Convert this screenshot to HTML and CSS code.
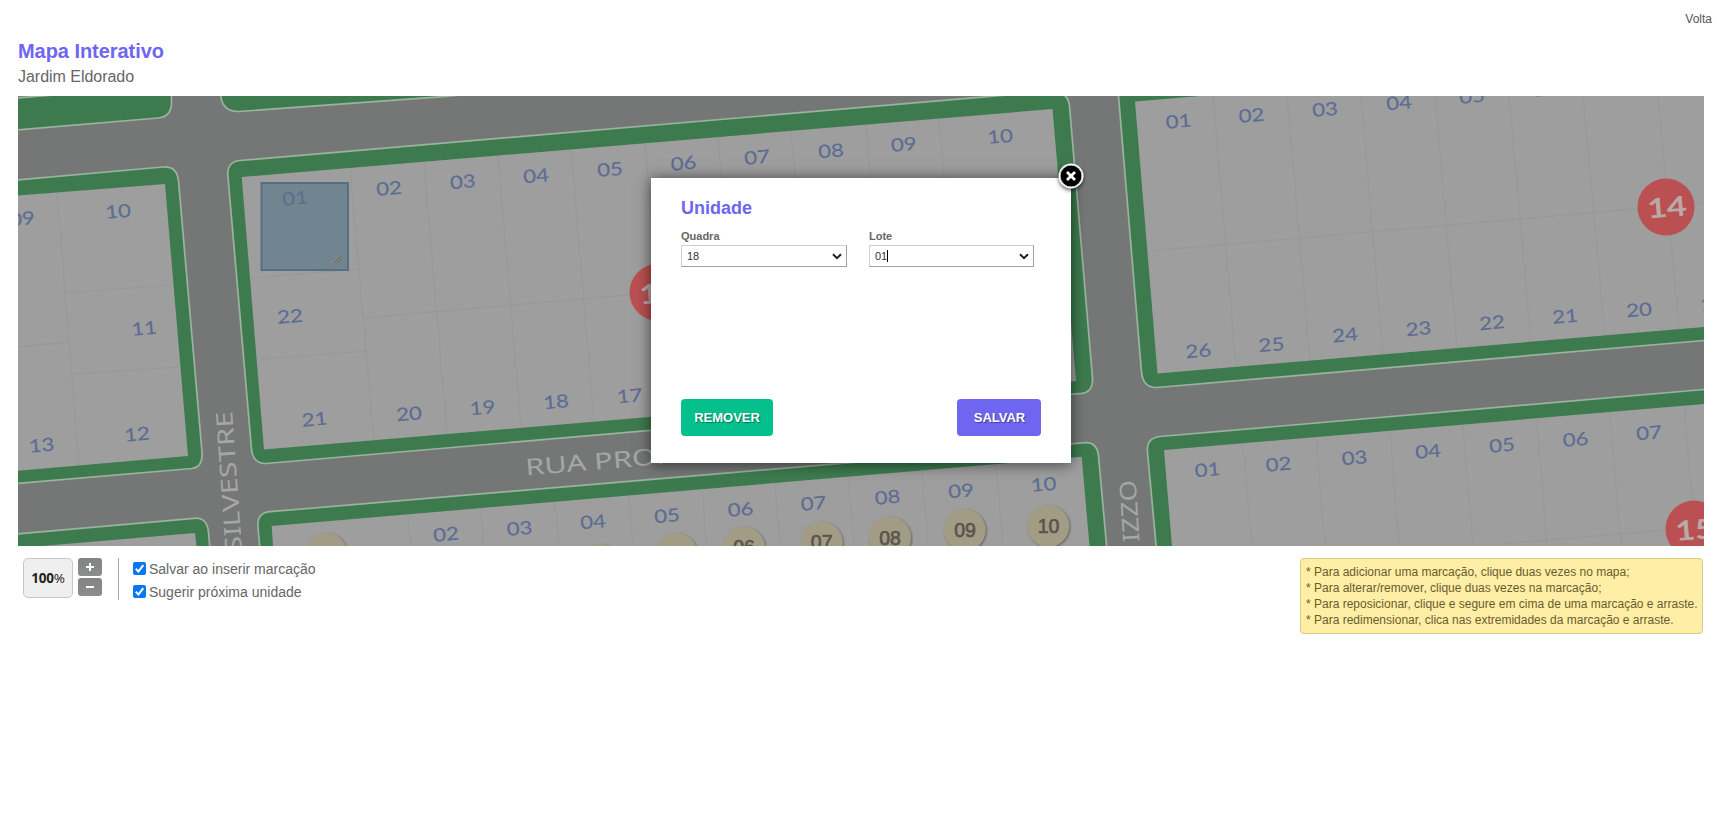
FILE: index.html
```html
<!DOCTYPE html>
<html lang="pt-BR">
<head>
<meta charset="utf-8">
<title>Mapa Interativo</title>
<link rel="stylesheet" href="styles.css">
</head>
<body>
<nav class="topbar"><a class="back">Volta</a></nav>
<main class="page">
  <h1 class="title">Mapa Interativo</h1>
  <p class="subtitle">Jardim Eldorado</p>

  <div class="map">
    <svg class="plan" viewBox="18 96 1686 450" width="1686" height="450">
      <rect class="road" x="18" y="96" width="1686" height="450"/>
      <!-- blocks with grass border -->
      <g class="grass">
        <path d="M10 98.500L60 94.500H171.500V102Q171.500 117 158 118L10 130.500Z"/>
        <path d="M220.500 90Q220 112 239 111.500L440 96.800L520 90Z"/>
        <path d="M10 180.500L163 167Q177 166 178.500 181L202 452Q203 467 192 468.500L10 484Z"/>
        <path d="M228 177Q226 162 240 160.500L1048 91.500Q1068 90 1069.500 106L1092.500 378Q1093 392 1082 393.300L266 463.500Q253 464 251.500 449Z"/>
        <path d="M1118 90L1141.500 372Q1143 388 1157 387.500L1710 340V90Z"/>
        <path d="M10 534.500L194 518.300Q207 517 208.500 532L210 550H10Z"/>
        <path d="M260 550L258 527Q256.500 513 270 511.700L1085 442.700Q1097 442 1098.500 456L1107 550Z"/>
        <path d="M1156.500 550L1147.500 452Q1146 438 1160 436.500L1710 389V550Z"/>
      </g>
      <g class="block">
        <path d="M18 195.500L165 184L188 456L18 470.700Z"/>
        <path d="M241.700 177L1052.500 109L1076 381L264 449.500Z"/>
        <path d="M1135 101.500L1200 96H1704V327L1157.500 373.500Z"/>
        <path d="M42 546L195 533L196.500 546Z"/>
        <path d="M271.700 526L1081.700 456.700L1089.500 546H273Z"/>
        <path d="M1164 450L1704 404V546H1172Z"/>
      </g>
      <path class="grid" d="M57 193L79 465M65 293L170 285M73 374L180 367M18 347L68 342M350 168L374 440M424 162L447 434M498 156L521 428M571 149L594 421M645 143L668 415M718 137L741 409M791 131L814 403M866 125L889 397M939 119L962 391M250 278L359 269M261 359L367 351M363 318L1066 257M1213 96L1236 366M1287 96L1310 360M1361 96L1383 354M1435 96L1457 348M1509 96L1531 342M1583 96L1605 335M1658 96L1679 329M1150 251L1704 203M408 515L411 546M481 508L484 546M555 502L559 546M629 496L633 546M702 489L707 546M775 483L780 546M848 477L854 546M922 471L928 546M996 464L1003 546M1243 444L1252 546M1316 438L1325 546M1390 432L1399 546M1463 425L1473 546M1537 419L1547 546M1610 413L1621 546M1684 406L1696 546M1500 544L1704 527"/>

      <rect class="marker" x="261.500" y="183" width="86.500" height="87"/>
      <path class="grip" d="M331 262.500H340V254Z"/>
      <path class="grip-lines" d="M334 263L341 256M337 263.500L341 259.500"/>

      <g class="street">
        <text transform="translate(242 551.500) rotate(-94)" textLength="141" lengthAdjust="spacingAndGlyphs">SILVESTRE</text>
        <text transform="translate(1139.500 541.500) rotate(-93.500)" textLength="62" lengthAdjust="spacingAndGlyphs">IZZO</text>
        <text transform="translate(526 475.500) rotate(-4.800)" textLength="147" lengthAdjust="spacingAndGlyphs">RUA PROF</text>
      </g>

      <g class="lots">
        <text x="22" y="218">09</text><text x="118" y="210.500">10</text><text x="144" y="327.500">11</text><text x="137" y="433.500">12</text><text x="41.500" y="444.500">13</text>
        <text class="covered" x="295" y="197.500">01</text><text x="389" y="187.500">02</text><text x="462.700" y="181">03</text><text x="536" y="175">04</text><text x="610" y="168.500">05</text><text x="683.500" y="162.500">06</text><text x="757" y="156.500">07</text><text x="831" y="150">08</text><text x="903.700" y="143.500">09</text><text x="1000" y="135.500">10</text>
        <text x="290" y="315.500">22</text><text x="314.500" y="418.500">21</text><text x="409" y="413">20</text><text x="482.300" y="407">19</text><text x="556" y="401">18</text><text x="629.500" y="395">17</text>
        <text x="1178.500" y="120.500">01</text><text x="1251.500" y="114.500">02</text><text x="1325" y="108.500">03</text><text x="1399" y="102">04</text><text x="1472" y="95.500">05</text><text x="1545" y="88.500">06</text>
        <text x="1198.300" y="350">26</text><text x="1271.300" y="343.800">25</text><text x="1345" y="334.200">24</text><text x="1418.500" y="328">23</text><text x="1492" y="322">22</text><text x="1565" y="315.500">21</text><text x="1639" y="309">20</text><text x="1713" y="303">19</text>
        <text x="446" y="533.500">02</text><text x="519.500" y="527.500">03</text><text x="593" y="521">04</text><text x="667" y="515">05</text><text x="740.500" y="508.500">06</text><text x="813.500" y="502.500">07</text><text x="887.500" y="496.500">08</text><text x="961" y="490">09</text><text x="1043.500" y="483.500">10</text>
        <text x="1207.500" y="469">01</text><text x="1278.500" y="463.500">02</text><text x="1354.500" y="457">03</text><text x="1428" y="450.500">04</text><text x="1502" y="444.500">05</text><text x="1575.500" y="438.500">06</text><text x="1649" y="432">07</text>
      </g>

      <g class="quadra">
        <circle cx="658" cy="292.300" r="28.500"/><circle cx="1666" cy="207" r="28.500"/><circle cx="1694" cy="529" r="28.500"/>
        <text x="659" y="292">18</text><text x="1667" y="206">14</text><text x="1695" y="528.500">15</text>
      </g>

      <g class="pins">
        <circle cx="326.500" cy="554" r="21"/><circle cx="601.700" cy="565" r="21"/><circle cx="676.700" cy="554" r="21"/><circle cx="744" cy="547.500" r="21"/><circle cx="821.700" cy="542.500" r="21"/><circle cx="890" cy="537.500" r="21"/><circle cx="964.700" cy="530" r="21"/><circle cx="1048.300" cy="526" r="21"/>
        <text x="744" y="554">06</text><text x="821.700" y="549">07</text><text x="890" y="545">08</text><text x="965" y="537">09</text><text x="1048.500" y="533">10</text>
      </g>
    </svg>

    <section class="dialog">
      <button class="close" aria-label="Fechar"><svg width="22" height="22" viewBox="0 0 22 22"><path d="M7 7L15 15M15 7L7 15"/></svg></button>
      <h2 class="dialog-title">Unidade</h2>
      <div class="fields">
        <div class="field">
          <span class="label">Quadra</span>
          <div class="combo"><span>18</span><svg width="10" height="7" viewBox="0 0 10 7"><path d="M1 1.200L5 5.200L9 1.200"/></svg></div>
        </div>
        <div class="field field-lote">
          <span class="label">Lote</span>
          <div class="combo"><span class="typing">01</span><svg width="10" height="7" viewBox="0 0 10 7"><path d="M1 1.200L5 5.200L9 1.200"/></svg></div>
        </div>
      </div>
      <div class="actions">
        <button class="btn remove">REMOVER</button>
        <button class="btn save">SALVAR</button>
      </div>
    </section>
  </div>

  <div class="toolbar">
    <div class="zoom-value"><b>100</b>%</div>
    <div class="zoom-buttons">
      <button class="zoom-btn"><svg width="24" height="18"><path d="M8 9H16M12 5V13"/></svg></button>
      <button class="zoom-btn"><svg width="24" height="18"><path d="M8 9H16"/></svg></button>
    </div>
    <div class="options">
      <label class="option"><span class="check"><svg width="13" height="13"><path d="M2.800 6.800L5.400 9.500L10.300 3.200"/></svg></span>Salvar ao inserir marcação</label>
      <label class="option"><span class="check"><svg width="13" height="13"><path d="M2.800 6.800L5.400 9.500L10.300 3.200"/></svg></span>Sugerir próxima unidade</label>
    </div>
    <div class="help">
      <p>* Para adicionar uma marcação, clique duas vezes no mapa;</p>
      <p>* Para alterar/remover, clique duas vezes na marcação;</p>
      <p>* Para reposicionar, clique e segure em cima de uma marcação e arraste.</p>
      <p>* Para redimensionar, clica nas extremidades da marcação e arraste.</p>
    </div>
  </div>
</main>
</body>
</html>
```
FILE: styles.css
```css
* { box-sizing: border-box; }
body {
  margin: 0;
  background: #fff;
  color: #666;
  font-family: "Liberation Sans", Arial, sans-serif;
  overflow: hidden;
}
h1, h2, p { margin: 0; }
button { border: 0; padding: 0; font-family: inherit; }

.topbar { display: flex; justify-content: flex-end; height: 38px; padding: 11px 5px 0 0; }
.back { font-size: 12px; line-height: 16px; color: #555; }

.page { padding: 0 13px 0 18px; }
.title { height: 26px; font-size: 20px; line-height: 26px; letter-spacing: -.050px; color: #6e66f0; }
.subtitle { height: 32px; font-size: 16px; line-height: 25px; letter-spacing: -.030px; }

.map { position: relative; width: 1686px; height: 450px; }
.plan { display: block; }
.road { fill: #757777; }
.grass path { fill: #3d7b4f; stroke: #9bb39e; stroke-width: 1.7; }
.block path { fill: #9e9e9e; }
.grid { fill: none; stroke: #8f9090; stroke-width: 1; opacity: .45; }
.street text { font: 23px "Noto Sans", sans-serif; fill: #a5a6a6; }
.lots text, .quadra text {
  font-family: Lato, sans-serif;
  text-anchor: middle;
  dominant-baseline: central;
  transform-box: fill-box;
  transform-origin: center;
  transform: rotate(-4.8deg) scale(1.2, .98);
}
.lots text { font-size: 18.500px; fill: #5c6c93; stroke: #5c6c93; stroke-width: .15; }
.lots .covered { fill: #58718d; stroke: #58718d; }
.quadra circle { fill: #bb5052; }
.quadra text { font-size: 27px; fill: #b9aaa6; stroke: #b9aaa6; stroke-width: .8; transform: rotate(-4.8deg) scale(1.25, .98); }
.pins circle { fill: #a39c85; filter: drop-shadow(1px 1px 1px rgba(60, 60, 60, .6)); }
.pins text { font-size: 19.500px; stroke: #5b554c; stroke-width: .7; text-anchor: middle; fill: #5b554c; }
.marker { fill: #6b8290; fill-opacity: .88; stroke: #586e84; stroke-width: 2; }
.grip { fill: #8a8583; }
.grip-lines { stroke: #566470; fill: none; }

.dialog {
  position: absolute;
  left: 633px;
  top: 82px;
  width: 420px;
  height: 285px;
  padding: 19px 30px 27px;
  display: flex;
  flex-direction: column;
  background: #fff;
  box-shadow: 0 1px 14px rgba(0, 0, 0, .6);
}
.close {
  position: absolute;
  right: -11px;
  top: -13px;
  width: 22px;
  height: 22px;
  border-radius: 50%;
  background: #000;
  box-shadow: inset 0 0 0 .500px #fff, 0 0 0 1.500px #fff, 0 2px 4px 1px rgba(0, 0, 0, .7);
}
.close svg { display: block; }
.close path { stroke: #fff; stroke-width: 2.800; fill: none; }
.dialog-title { font-size: 18px; line-height: 22px; color: #6e66f0; }
.fields { display: flex; gap: 22px; padding-top: 10px; }
.field { width: 166px; }
.field-lote { width: 165px; }
.label { display: block; height: 16px; font-size: 11px; line-height: 14px; font-weight: 700; color: #666; }
.combo {
  display: flex;
  align-items: center;
  justify-content: space-between;
  height: 22px;
  padding: 0 4px 0 5px;
  border: 1px solid;
  border-color: #cfcfcf #9f9f9f #9f9f9f #cfcfcf;
  font-size: 11px;
  color: #333;
}
.combo path { fill: none; stroke: #222; stroke-width: 2; }
.typing { border-right: 1px solid #000; }
.actions { display: flex; justify-content: space-between; margin-top: auto; }
.btn { height: 37px; border-radius: 4px; color: #fff; font-size: 13px; font-weight: 700; text-shadow: 1px 1px 1px rgba(0, 0, 0, .4); }
.remove { width: 92px; background: #03c08c; }
.save { width: 84px; padding-left: 1px; background: #6e66f0; }

.toolbar { display: flex; align-items: flex-start; padding: 12px 0 0 5px; }
.zoom-value {
  width: 50px;
  height: 40px;
  border: 1px solid #c8c8ca;
  border-radius: 5px;
  background: #efefef;
  color: #222;
  font: 13.500px/38px "Open Sans", sans-serif;
  text-align: center;
  letter-spacing: -.200px;
}
.zoom-buttons { display: flex; flex-direction: column; gap: 2px; margin-left: 5px; }
.zoom-btn { width: 24px; height: 18px; border-radius: 3px; background: linear-gradient(#828383, #8c8d8d); }
.zoom-btn svg { display: block; }
.zoom-btn path { stroke: #fff; stroke-width: 2; fill: none; }
.options {
  display: flex;
  flex-direction: column;
  height: 42px;
  margin-left: 16px;
  padding-left: 14px;
  border-left: 1px solid #aaa;
}
.option { display: flex; align-items: center; gap: 3px; height: 23px; font-size: 14px; flex-shrink: 0; }
.option:first-child { margin-top: -1px; }
.check { width: 13px; height: 13px; border-radius: 2px; background: #0b76f5; }
.check svg { display: block; }
.check path { stroke: #fff; stroke-width: 2; fill: none; }
.help {
  width: 403px;
  height: 76px;
  margin-left: auto;
  margin-right: 1px;
  padding: 5px 0 0 5px;
  border: 1px solid #d9ca84;
  border-radius: 4px;
  background: #ffeea6;
  color: #6a5c2c;
  font-size: 12px;
  line-height: 16px;
  white-space: nowrap;
}
```
